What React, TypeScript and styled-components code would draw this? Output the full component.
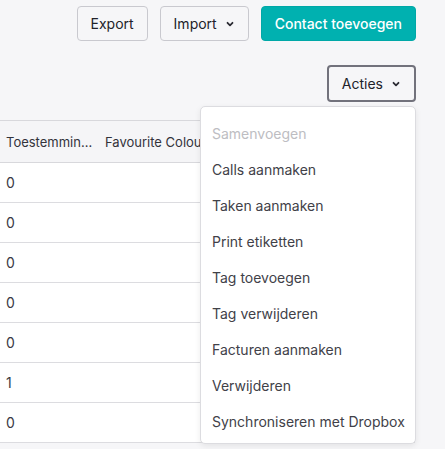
import React from "react";
import styled, { createGlobalStyle } from "styled-components";

const Global = createGlobalStyle`
  html, body { margin: 0; padding: 0; background: #f6f6f8; }
  body { font-family: Inter, "Noto Sans", sans-serif; font-size: 14px; color: #2b2b33; }
  * { box-sizing: border-box; }
`;

const Page = styled.div`
  position: relative;
  width: 445px;
  height: 449px;
  overflow: hidden;
`;

const Toolbar = styled.div`
  display: flex;
  justify-content: flex-end;
  gap: 12px;
  padding: 6px 29px 0 0;
`;

const Button = styled.button<{ $primary?: boolean; $active?: boolean }>`
  display: inline-flex;
  align-items: center;
  gap: 8px;
  height: ${(p) => (p.$active ? "37px" : "35px")};
  padding: 0 13px;
  font-family: Inter, "Noto Sans", sans-serif;
  font-size: 14px;
  font-weight: ${(p) => (p.$primary ? 500 : 400)};
  color: ${(p) => (p.$primary ? "#ffffff" : "#22222a")};
  background: ${(p) => (p.$primary ? "#00b1b0" : "transparent")};
  border: ${(p) =>
    p.$primary ? "1px solid #00a8a7" : p.$active ? "2px solid #72727c" : "1px solid #c9c9cf"};
  border-radius: 4px;
  cursor: pointer;
`;

const ActionsRow = styled.div`
  display: flex;
  justify-content: flex-end;
  padding: 24px 29px 0 0;
`;

const Chevron = () => (
  <svg width="10" height="10" viewBox="0 0 10 10" fill="none">
    <path d="M2.5 3.8 L5 6.3 L7.5 3.8" stroke="#2b2b33" strokeWidth="1.8" strokeLinecap="round" strokeLinejoin="round" />
  </svg>
);

const Table = styled.div`
  margin-top: 18px;
  width: 415px;
  border-right: 1px solid #dcdce0;
  font-size: 13px;
`;

const HeaderRow = styled.div`
  display: grid;
  grid-template-columns: 99px 140px 1fr;
  height: 43px;
  align-items: center;
  background: #f5f5f7;
  border-top: 1px solid #d8d8dc;
  border-bottom: 1px solid #d8d8dc;
`;

const HeaderCell = styled.div`
  padding: 0 5px 0 6px;
  color: #33333b;
  white-space: nowrap;
  overflow: hidden;
  text-overflow: ellipsis;
`;

const Row = styled.div`
  display: grid;
  grid-template-columns: 99px 140px 1fr;
  height: 40px;
  align-items: center;
  background: #ffffff;
  border-bottom: 1px solid #dcdce0;
`;

const Cell = styled.div`
  padding-left: 6px;
  font-size: 14px;
  color: #3a3a44;
`;

const Menu = styled.div`
  position: absolute;
  top: 106px;
  left: 200px;
  width: 216px;
  padding: 8px 0 4px;
  background: #ffffff;
  border: 1px solid #dcdce0;
  border-radius: 5px;
  box-shadow: 0 2px 6px rgba(0, 0, 0, 0.08);
`;

const MenuItem = styled.div<{ $disabled?: boolean }>`
  height: 36px;
  display: flex;
  align-items: center;
  padding-left: 11px;
  color: ${(p) => (p.$disabled ? "#bdbdc2" : "#414148")};
  white-space: nowrap;
`;

const values = ["0", "0", "0", "0", "0", "1", "0"];
const items = [
  "Calls aanmaken",
  "Taken aanmaken",
  "Print etiketten",
  "Tag toevoegen",
  "Tag verwijderen",
  "Facturen aanmaken",
  "Verwijderen",
  "Synchroniseren met Dropbox",
];

export default function App() {
  return (
    <Page>
      <Global />
      <Toolbar>
        <Button>Export</Button>
        <Button>
          Import <Chevron />
        </Button>
        <Button $primary>Contact toevoegen</Button>
      </Toolbar>
      <ActionsRow>
        <Button $active>
          Acties <Chevron />
        </Button>
      </ActionsRow>
      <Table>
        <HeaderRow>
          <HeaderCell>Toestemming nieuwsbrief</HeaderCell>
          <HeaderCell>Favourite Colour</HeaderCell>
          <HeaderCell />
        </HeaderRow>
        {values.map((v, i) => (
          <Row key={i}>
            <Cell>{v}</Cell>
            <Cell />
            <Cell />
          </Row>
        ))}
      </Table>
      <Menu>
        <MenuItem $disabled>Samenvoegen</MenuItem>
        {items.map((t) => (
          <MenuItem key={t}>{t}</MenuItem>
        ))}
      </Menu>
    </Page>
  );
}
